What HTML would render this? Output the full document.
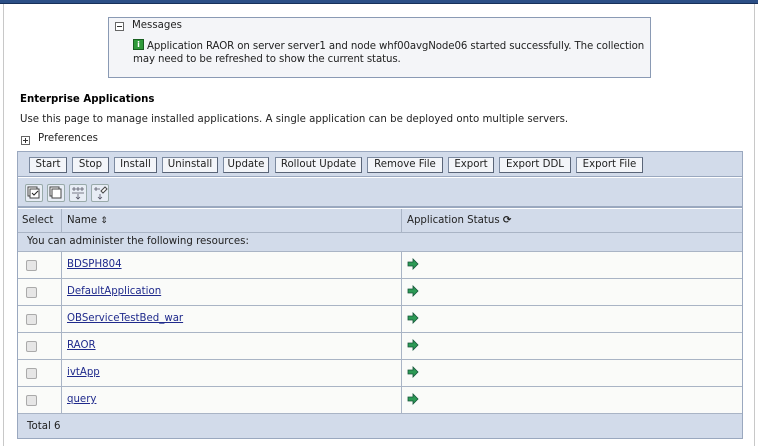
<!DOCTYPE html>
<html><head><style>
*{margin:0;padding:0;box-sizing:border-box}
body{width:758px;height:446px;background:#fff;font-family:"DejaVu Sans","Liberation Sans",sans-serif;font-size:10.2px;color:#222;position:relative;overflow:hidden}
.a{position:absolute}
.topbar{left:0;top:0;width:758px;height:4px;background:#2c4f86;border-bottom:1px solid #17305a}
.lb{left:3px;top:4px;width:1px;height:442px;background:#c8c8c8}
.rb{left:754px;top:4px;width:1px;height:442px;background:#c8c8c8}
.msg{left:108px;top:17px;width:543px;height:61px;border:1px solid #8a9ab4;background:#f4f5f8}
.pm{display:inline-block;width:9px;height:9px;border:1px solid #666;position:relative;background:#fff}
.pm:before{content:"";position:absolute;left:1px;top:3px;width:5px;height:1px;background:#333}
.pm.p:after{content:"";position:absolute;left:3px;top:1px;width:1px;height:5px;background:#333}
.tbl{left:17px;top:151px;width:726px;height:288px;border:1px solid #9aa8bf}
.bar{background:#d2dbea}
.btn{position:absolute;top:5px;height:16px;border:1px solid #7c8aa0;border-right-color:#5a6578;border-bottom-color:#5a6578;background:#f3f5f9;line-height:14px;text-align:center;font-size:10.2px}
.ic{position:absolute;top:6px;width:18px;height:18px;border:1px solid #9aa;background:#e8edf5;border-radius:2px}
.row{position:absolute;left:0;width:724px;height:27px;background:#fafbf9;border-top:1px solid #a9b4c5}
.cb{position:absolute;left:8px;top:8px;width:11px;height:11px;border:1px solid #aaa;background:#e6e6e6;border-radius:2px}
.vl1,.vl2{position:absolute;top:0;width:1px;height:100%;background:#a9b4c5}
.vl1{left:43px}.vl2{left:383px}
.lnk{position:absolute;left:49px;top:7px;color:#1f2a8c;text-decoration:underline}
.arr{position:absolute;left:389px;top:6px}
</style></head><body>
<div class="a topbar"></div>
<div class="a lb"></div><div class="a rb"></div>
<div class="a msg">
 <div class="a" style="left:6px;top:4px"><span class="pm"></span></div>
 <div class="a" style="left:23px;top:2px">Messages</div>
 <div class="a" style="left:24px;top:21px;width:11px;height:11px;background:#2f9a3a;border:1px solid #185f20;color:#fff;font-size:8px;line-height:9px;text-align:center;font-weight:bold">i</div>
 <div class="a" style="left:24px;top:22px;line-height:13px;white-space:nowrap;letter-spacing:-0.1px"><span style="padding-left:14px">Application RAOR on server server1 and node whf00avgNode06 started successfully. The collection</span><br>may need to be refreshed to show the current status.</div>
</div>
<div class="a" style="left:20px;top:94px;font-weight:bold;color:#000">Enterprise Applications</div>
<div class="a" style="left:20px;top:114px">Use this page to manage installed applications. A single application can be deployed onto multiple servers.</div>
<div class="a" style="left:21px;top:136px"><span class="pm p"></span></div>
<div class="a" style="left:38px;top:133px">Preferences</div>
<div class="a tbl">
 <div class="a bar" style="left:0;top:0;width:724px;height:25px;border-bottom:1px solid #9aa8bf">
  <div class="btn" style="left:11px;width:38px">Start</div>
  <div class="btn" style="left:54px;width:37px">Stop</div>
  <div class="btn" style="left:96px;width:43px">Install</div>
  <div class="btn" style="left:144px;width:56px">Uninstall</div>
  <div class="btn" style="left:205px;width:46px">Update</div>
  <div class="btn" style="left:257px;width:87px">Rollout Update</div>
  <div class="btn" style="left:349px;width:76px">Remove File</div>
  <div class="btn" style="left:430px;width:46px">Export</div>
  <div class="btn" style="left:481px;width:72px">Export DDL</div>
  <div class="btn" style="left:558px;width:67px">Export File</div>
 </div>
 <div class="a bar" style="left:0;top:26px;width:724px;height:30px;border-bottom:2px solid #9aa8bf">
  <div class="ic" style="left:7px"><svg width="16" height="16"><rect x="2" y="2" width="9" height="9" fill="#fff" stroke="#444"/><rect x="4" y="4" width="9" height="9" fill="#fff" stroke="#444"/><path d="M6 8l2 2 4-4" stroke="#222" fill="none"/></svg></div>
  <div class="ic" style="left:29px"><svg width="16" height="16"><rect x="2" y="2" width="9" height="9" fill="#fff" stroke="#444"/><rect x="4" y="4" width="9" height="9" fill="#fff" stroke="#444"/></svg></div>
  <div class="ic" style="left:51px"><svg width="16" height="16"><path d="M2 4h12M2 8h12M8 9v5M6 12l2 2 2-2M4 2v4M8 2v4M12 2v4" stroke="#556" stroke-width="0.8" fill="none"/></svg></div>
  <div class="ic" style="left:73px"><svg width="16" height="16"><path d="M2 4h6M8 9v5M6 12l2 2 2-2M4 2v4" stroke="#556" stroke-width="0.8" fill="none"/><path d="M9 6l4-4 2 2-4 4z" fill="#fff" stroke="#444"/></svg></div>
 </div>
 <div class="a bar" style="left:0;top:57px;width:724px;height:24px;border-bottom:1px solid #a9b4c5">
  <div class="vl1"></div><div class="vl2"></div>
  <div class="a" style="left:4px;top:6px">Select</div>
  <div class="a" style="left:49px;top:6px">Name <span style="font-size:9px">&#8661;</span></div>
  <div class="a" style="left:389px;top:6px">Application Status <span style="font-weight:bold">&#10227;</span></div>
 </div>
 <div class="a bar" style="left:0;top:81px;width:724px;height:18px">
  <div class="a" style="left:9px;top:3px">You can administer the following resources:</div>
 </div>
 <div class="row" style="top:99px"><div class="vl1"></div><div class="vl2"></div><div class="cb"></div><span class="lnk">BDSPH804</span><svg class="arr" width="12" height="12"><path d="M1 4h5V1l5 5-5 5V8H1z" fill="#2c9a55" stroke="#15553a" stroke-width="0.8"/></svg></div>
 <div class="row" style="top:126px"><div class="vl1"></div><div class="vl2"></div><div class="cb"></div><span class="lnk">DefaultApplication</span><svg class="arr" width="12" height="12"><path d="M1 4h5V1l5 5-5 5V8H1z" fill="#2c9a55" stroke="#15553a" stroke-width="0.8"/></svg></div>
 <div class="row" style="top:153px"><div class="vl1"></div><div class="vl2"></div><div class="cb"></div><span class="lnk">OBServiceTestBed_war</span><svg class="arr" width="12" height="12"><path d="M1 4h5V1l5 5-5 5V8H1z" fill="#2c9a55" stroke="#15553a" stroke-width="0.8"/></svg></div>
 <div class="row" style="top:180px"><div class="vl1"></div><div class="vl2"></div><div class="cb"></div><span class="lnk">RAOR</span><svg class="arr" width="12" height="12"><path d="M1 4h5V1l5 5-5 5V8H1z" fill="#2c9a55" stroke="#15553a" stroke-width="0.8"/></svg></div>
 <div class="row" style="top:207px"><div class="vl1"></div><div class="vl2"></div><div class="cb"></div><span class="lnk">ivtApp</span><svg class="arr" width="12" height="12"><path d="M1 4h5V1l5 5-5 5V8H1z" fill="#2c9a55" stroke="#15553a" stroke-width="0.8"/></svg></div>
 <div class="row" style="top:234px"><div class="vl1"></div><div class="vl2"></div><div class="cb"></div><span class="lnk">query</span><svg class="arr" width="12" height="12"><path d="M1 4h5V1l5 5-5 5V8H1z" fill="#2c9a55" stroke="#15553a" stroke-width="0.8"/></svg></div>
 <div class="a bar" style="left:0;top:261px;width:724px;height:25px;border-top:1px solid #a9b4c5">
  <div class="a" style="left:9px;top:7px">Total 6</div>
 </div>
</div>
</body></html>
